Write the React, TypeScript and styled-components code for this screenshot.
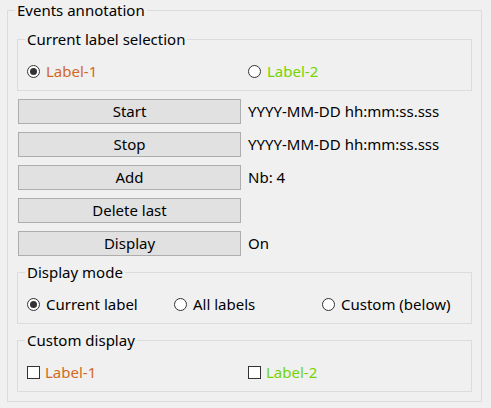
import React from 'react';
import styled, { createGlobalStyle } from 'styled-components';

const GlobalStyle = createGlobalStyle`
  html, body {
    margin: 0;
    background: #f0f0f0;
  }
  body {
    font-family: "Noto Sans", "Open Sans", "DejaVu Sans", sans-serif;
    font-size: 15px;
    color: #000;
  }
`;

const Page = styled.div`
  width: 491px;
  height: 408px;
  padding: 0 9px 0 7px;
  box-sizing: border-box;
`;

const Group = styled.fieldset<{ $pad?: string }>`
  margin: 0;
  min-width: 0;
  border: 1px solid #dcdcdc;
  padding: ${(p) => p.$pad ?? '12px 9px 9px 9px'};
  display: flex;
  flex-direction: column;
`;

const Title = styled.legend`
  padding: 0 2px;
  margin-left: -2px;
  line-height: 20px;
  height: 20px;
`;

const OptionRow = styled.div<{ $cols: string }>`
  display: grid;
  grid-template-columns: ${(p) => p.$cols};
  align-items: center;
  height: 20px;
`;

const Option = styled.label<{ $color?: string }>`
  display: flex;
  align-items: center;
  gap: 6px;
  color: ${(p) => p.$color ?? '#000'};
  line-height: 20px;
  white-space: nowrap;
`;

const Radio = styled.span<{ $on?: boolean }>`
  width: 13px;
  height: 13px;
  box-sizing: border-box;
  border-radius: 50%;
  border: 1px solid #333;
  background: #fff;
  display: flex;
  align-items: center;
  justify-content: center;
  flex: none;

  &::after {
    content: '';
    width: 7px;
    height: 7px;
    border-radius: 50%;
    background: ${(p) => (p.$on ? '#333' : 'transparent')};
  }
`;

const Check = styled.span`
  width: 13px;
  height: 13px;
  box-sizing: border-box;
  border: 1px solid #333;
  background: #fff;
  flex: none;
  margin-right: -1px;
`;

const Actions = styled.div`
  display: grid;
  grid-template-columns: 223px 1fr;
  column-gap: 7px;
  row-gap: 8px;
  padding: 8px 0 6px 1px;
`;

const Button = styled.button`
  height: 25px;
  margin: 0;
  padding: 0;
  border: 1px solid #adadad;
  background: #e1e1e1;
  font: inherit;
  color: #000;
  line-height: 23px;
`;

const Info = styled.span`
  line-height: 25px;
  white-space: nowrap;
`;

const Spacer = styled.div<{ $h: number }>`
  height: ${(p) => p.$h}px;
`;

const ORANGE = '#d2691e';
const GREEN = '#74d400';

const actions: [string, string][] = [
  ['Start', 'YYYY-MM-DD hh:mm:ss.sss'],
  ['Stop', 'YYYY-MM-DD hh:mm:ss.sss'],
  ['Add', 'Nb: 4'],
  ['Delete last', ''],
  ['Display', 'On'],
];

export default function App() {
  return (
    <>
      <GlobalStyle />
      <Page>
        <Group $pad="9px 9px 9px 9px">
          <Title>Events annotation</Title>

          <Group>
            <Title>Current label selection</Title>
            <OptionRow $cols="221px 1fr">
              <Option $color={ORANGE}>
                <Radio $on />
                Label-1
              </Option>
              <Option $color={GREEN}>
                <Radio />
                Label-2
              </Option>
            </OptionRow>
          </Group>

          <Actions>
            {actions.map(([name, info]) => (
              <React.Fragment key={name}>
                <Button>{name}</Button>
                <Info>{info}</Info>
              </React.Fragment>
            ))}
          </Actions>

          <Group>
            <Title>Display mode</Title>
            <OptionRow $cols="147px 148px 1fr">
              <Option>
                <Radio $on />
                Current label
              </Option>
              <Option>
                <Radio />
                All labels
              </Option>
              <Option>
                <Radio />
                Custom (below)
              </Option>
            </OptionRow>
          </Group>

          <Spacer $h={6} />

          <Group>
            <Title>Custom display</Title>
            <OptionRow $cols="221px 1fr">
              <Option $color={ORANGE}>
                <Check />
                Label-1
              </Option>
              <Option $color={GREEN}>
                <Check />
                Label-2
              </Option>
            </OptionRow>
          </Group>
        </Group>
      </Page>
    </>
  );
}
